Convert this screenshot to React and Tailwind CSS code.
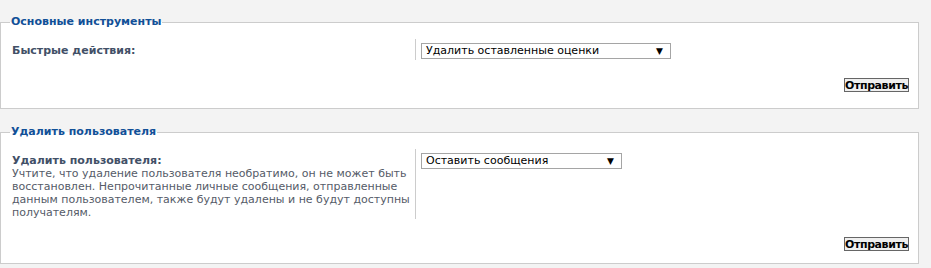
import React from 'react';

function FakeSelect({ value, width }) {
    return (
        <div
            className="flex items-center justify-between h-[16px] border border-[#a5a5a5] bg-white pl-[4px] pr-[7px] text-[11px] leading-[14px] text-black"
            style={{ width }}
        >
            <span>{value}</span>
            <span className="text-[9px] leading-none">▼</span>
        </div>
    );
}

function SubmitButton() {
    return (
        <div className="flex justify-end pr-[9px]">
            <button className="h-[14px] w-[65px] border border-[#666] bg-[#efefef] text-center text-[11px] font-bold leading-[11px] tracking-[-0.4px] text-black">
                Отправить
            </button>
        </div>
    );
}

function Panel({ legend, children, className }) {
    return (
        <fieldset className={`mr-[12px] border border-[#cccccc] bg-white pl-[11px] pt-[10px] ${className}`}>
            <legend className="-ml-[2px] px-[1px] text-[11px] font-bold leading-[14px] text-[#115098]">
                {legend}
            </legend>
            {children}
        </fieldset>
    );
}

export default function App() {
    return (
        <div className="h-[268px] w-[931px] overflow-hidden bg-[#f3f3f3] pt-[15px] font-['DejaVu_Sans','Verdana',sans-serif]">
            {/* Basic tools */}
            <Panel legend="Основные инструменты" className="pb-[16px]">
                <div className="flex">
                    <div className="w-[403px] pt-[5px] text-[11px] font-bold leading-[13px] text-[#425067]">
                        Быстрые действия:
                    </div>
                    <div className="border-l border-[#cccccc] pl-[5px] pt-[4px] pb-[1px]">
                        <FakeSelect value="Удалить оставленные оценки" width={250} />
                    </div>
                </div>
                <div className="mt-[18px]">
                    <SubmitButton />
                </div>
            </Panel>

            {/* Delete user */}
            <Panel legend="Удалить пользователя" className="mt-[16px] pb-[12px]">
                <div className="flex">
                    <div className="w-[403px] pt-[5px] text-[11px] leading-[13px]">
                        <div className="font-bold text-[#425067]">Удалить пользователя:</div>
                        <div className="text-[#555b68]">
                            Учтите, что удаление пользователя необратимо, он не может быть
                            <br />
                            восстановлен. Непрочитанные личные сообщения, отправленные
                            <br />
                            данным пользователем, также будут удалены и не будут доступны
                            <br />
                            получателям.
                        </div>
                    </div>
                    <div className="border-l border-[#cccccc] pl-[5px] pt-[4px]">
                        <FakeSelect value="Оставить сообщения" width={201} />
                    </div>
                </div>
                <div className="mt-[18px]">
                    <SubmitButton />
                </div>
            </Panel>
        </div>
    );
}
